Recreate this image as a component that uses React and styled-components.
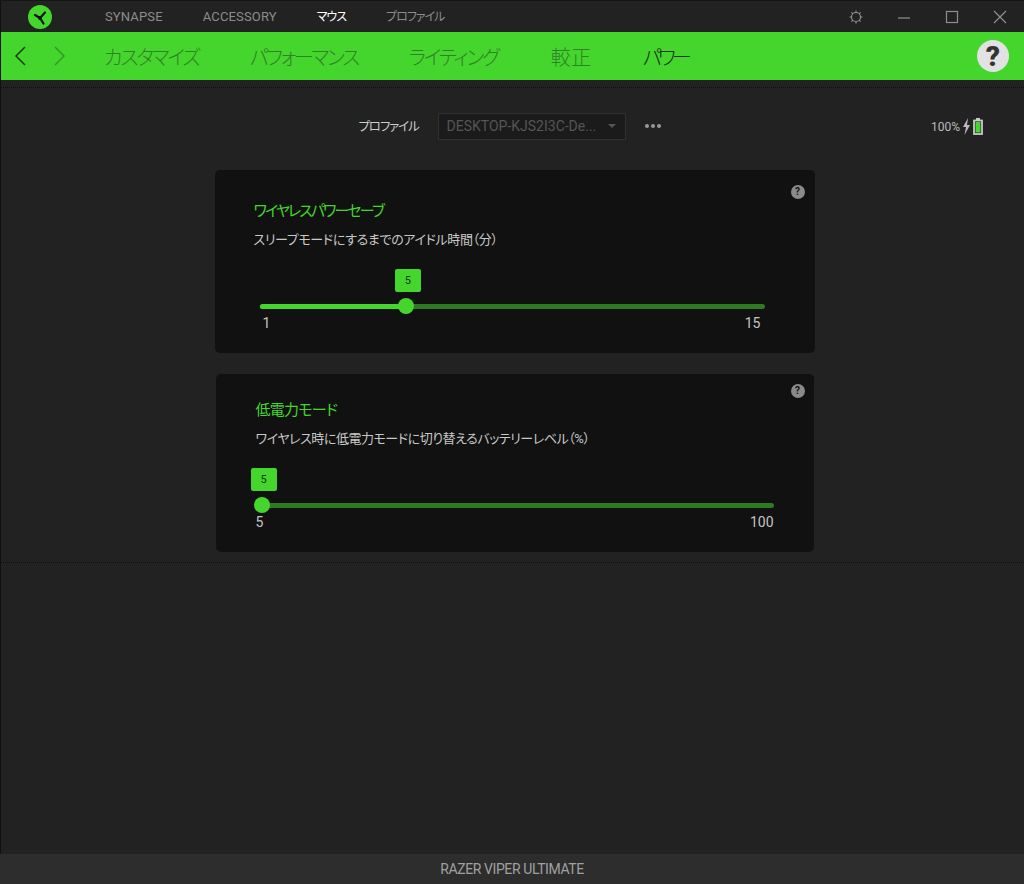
import React from 'react';
import styled, { createGlobalStyle } from 'styled-components';

const GREEN = '#44d62c';
const FONT = 'Roboto, "Noto Sans CJK JP", sans-serif';

const GlobalStyle = createGlobalStyle`
  html, body {
    margin: 0;
    height: 100%;
    overflow: hidden;
    background: #222;
  }
  body {
    font-family: ${FONT};
    font-feature-settings: "palt";
  }
`;

const Shell = styled.div`
  height: 884px;
  display: flex;
  flex-direction: column;
  box-sizing: border-box;
  border-top: 1px solid #151515;
`;

const Frame = styled.div`
  flex: 1;
  display: flex;
  flex-direction: column;
  border-left: 1px solid #111;
  min-height: 0;
`;

// top bar
const TitleBar = styled.header`
  height: 31px;
  display: flex;
  align-items: center;
  background: #222;
`;

const LogoSlot = styled.div`
  width: 104px;
  padding-left: 26px;
  box-sizing: border-box;
  display: flex;
`;

const TopNav = styled.nav`
  display: flex;
  align-items: center;
  gap: 40px;
`;

const TopLink = styled.span`
  font-size: ${(p) => (p.$kana ? 12 : 13)}px;
  line-height: 16px;
  letter-spacing: ${(p) => (p.$kana ? '-1px' : '0.15px')};
  color: ${(p) => (p.$active ? '#fff' : '#8c8c8c')};
`;

const WindowButtons = styled.div`
  margin-left: auto;
  display: flex;
  align-items: center;
  padding-right: 16px;
  gap: 32px;
`;

const WindowIcon = styled.svg`
  display: block;
  width: 16px;
  height: 16px;
  fill: none;
  stroke: #8f8f8f;
  stroke-width: 1.2;
`;

// green bar
const SubBar = styled.div`
  height: 48px;
  flex: none;
  display: flex;
  align-items: center;
  background: ${GREEN};
`;

const Arrows = styled.div`
  width: 103px;
  padding-left: 13px;
  box-sizing: border-box;
  display: flex;
  gap: 24px;
`;

const Arrow = styled.svg`
  display: block;
  width: 14px;
  height: 20px;
  fill: none;
  stroke: ${(p) => (p.$dim ? '#319c22' : '#1c3a16')};
  stroke-width: 1.5;
`;

const SubNav = styled.nav`
  display: flex;
  gap: 51px;
`;

const SubLink = styled.span`
  font-size: 20px;
  font-weight: 300;
  margin-left: ${(p) => p.$lead ?? 0}px;
  letter-spacing: ${(p) => p.$spacing ?? -2.1}px;
  color: ${(p) => (p.$active ? '#16300f' : '#34802a')};
`;

const HelpBig = styled.div`
  margin-left: auto;
  margin-right: 15px;
  width: 32px;
  height: 32px;
  border-radius: 50%;
  background: #e2e2e2;
  color: #333;
  font-size: 28px;
  font-weight: 900;
  display: flex;
  align-items: center;
  justify-content: center;
`;

// page
const Section = styled.main`
  margin-top: 7px;
  border-top: 1px dotted #0d0d0d;
  border-bottom: 1px dotted #0d0d0d;
  height: 474px;
  flex: none;
  padding-left: 4px;
  display: flex;
  flex-direction: column;
  align-items: center;
`;

const ProfileRow = styled.div`
  width: 100%;
  box-sizing: border-box;
  padding: 25px 10px 0 0;
  display: grid;
  grid-template-columns: 1fr auto 1fr;
  align-items: center;
`;

const ProfileControls = styled.div`
  grid-column: 2;
  display: flex;
  align-items: center;
`;

const ProfileLabel = styled.span`
  font-size: 12.5px;
  letter-spacing: -1.15px;
  padding-bottom: 2px;
  color: #ccc;
  margin-right: 19px;
`;

const ProfileSelect = styled.div`
  width: 188px;
  height: 27px;
  box-sizing: border-box;
  padding: 0 9px 2px 8px;
  display: flex;
  align-items: center;
  justify-content: space-between;
  background: #1b1b1b;
  border: 1px solid #303030;
  font-size: 14px;
  color: #555;
`;

const Caret = styled.span`
  width: 0;
  height: 0;
  border-left: 4px solid transparent;
  border-right: 4px solid transparent;
  border-top: 4px solid #555;
`;

const Dots = styled.div`
  display: flex;
  gap: 2px;
  margin-left: 19px;
  padding-bottom: 2px;
`;

const Dot = styled.span`
  width: 4px;
  height: 4px;
  border-radius: 50%;
  background: #999;
`;

const Battery = styled.div`
  grid-column: 3;
  justify-self: end;
  padding-right: 31px;
  display: flex;
  align-items: center;
  gap: 2px;
  font-size: 12px;
  color: #bbb;
`;

const Card = styled.section`
  position: relative;
  box-sizing: border-box;
  width: ${(p) => p.$width}px;
  height: ${(p) => p.$height}px;
  margin-top: ${(p) => p.$top}px;
  padding: ${(p) => p.$padTop}px ${(p) => p.$padRight}px 0 ${(p) => p.$padLeft}px;
  background: #111;
  border-radius: 5px;
`;

const CardHelp = styled.span`
  position: absolute;
  top: ${(p) => p.$top}px;
  right: ${(p) => p.$right}px;
  width: 14px;
  height: 14px;
  border-radius: 50%;
  background: #8a8a8a;
  color: #111;
  font-size: 10px;
  font-weight: 700;
  line-height: 14px;
  text-align: center;
`;

const CardTitle = styled.h2`
  margin: 0;
  font-size: 15px;
  line-height: 20px;
  font-weight: 400;
  letter-spacing: ${(p) => p.$spacing}px;
  color: ${GREEN};
`;

const CardText = styled.p`
  margin: 10px 0 0;
  font-size: 13px;
  line-height: 18px;
  letter-spacing: ${(p) => p.$spacing}px;
  color: #c8c8c8;
`;

const Slider = styled.div`
  margin-top: 55px;
  margin-left: ${(p) => p.$left}px;
`;

const Track = styled.div`
  position: relative;
  height: 5px;
  border-radius: 3px;
  background: #2d7a22;
`;

const TrackFill = styled.div`
  height: 100%;
  border-radius: 3px;
  background: ${GREEN};
`;

const Thumb = styled.span`
  position: absolute;
  top: -6px;
  width: 16px;
  height: 16px;
  margin-left: -8px;
  border-radius: 50%;
  background: ${GREEN};
`;

const Bubble = styled.span`
  position: absolute;
  top: -35px;
  width: 26px;
  height: 23px;
  margin-left: -11px;
  border-radius: 2px;
  background: ${GREEN};
  color: #14380e;
  font-size: 11px;
  line-height: 23px;
  text-align: center;
`;

const Scale = styled.div`
  display: flex;
  justify-content: space-between;
  margin: 6px ${(p) => p.$end}px 0 ${(p) => p.$inset}px;
  font-size: 14px;
  line-height: 16px;
  color: #c4c4c4;
`;

const Footer = styled.footer`
  height: 30px;
  flex: none;
  margin-top: auto;
  display: flex;
  align-items: center;
  justify-content: center;
  background: #2d2d2d;
  color: #a0a0a0;
  font-size: 14px;
  letter-spacing: -0.4px;
`;

const PowerSlider = ({ min, max, value, width, left, inset, end }) => {
  const pos = 2 + ((value - min) / (max - min)) * width;
  return (
    <Slider $left={left}>
      <Track>
        <TrackFill style={{ width: pos }} />
        <Bubble style={{ left: pos }}>{value}</Bubble>
        <Thumb style={{ left: pos }} />
      </Track>
      <Scale $inset={inset} $end={end}>
        <span>{min}</span>
        <span>{max}</span>
      </Scale>
    </Slider>
  );
};

const Logo = () => (
  <svg width="26" height="26" viewBox="0 0 26 26">
    <circle cx="13" cy="13" r="12" fill={GREEN} />
    <path d="M13 14 L8 11 M13 14 L18 8.5 M13 14 L16.5 19.5" stroke="#111" strokeWidth="2.2" fill="none" strokeLinecap="round" />
    <circle cx="13" cy="14" r="2" fill="#111" />
  </svg>
);

const App = () => (
  <Shell>
    <GlobalStyle />
    <Frame>
      <TitleBar>
        <LogoSlot><Logo /></LogoSlot>
        <TopNav>
          <TopLink>SYNAPSE</TopLink>
          <TopLink>ACCESSORY</TopLink>
          <TopLink $kana $active>マウス</TopLink>
          <TopLink $kana>プロファイル</TopLink>
        </TopNav>
        <WindowButtons>
          <WindowIcon viewBox="0 0 16 16">
            <circle cx="8" cy="8" r="4.5" />
            <path d="M8 1.5v2M8 12.5v2M1.5 8h2M12.5 8h2M3.4 3.4l1.4 1.4M11.2 11.2l1.4 1.4M3.4 12.6l1.4-1.4M11.2 4.8l1.4-1.4" />
          </WindowIcon>
          <WindowIcon viewBox="0 0 16 16"><path d="M2 9h12" /></WindowIcon>
          <WindowIcon viewBox="0 0 16 16"><rect x="2.5" y="2.5" width="11" height="11" /></WindowIcon>
          <WindowIcon viewBox="0 0 16 16"><path d="M2 2l12 12M14 2L2 14" /></WindowIcon>
        </WindowButtons>
      </TitleBar>
      <SubBar>
        <Arrows>
          <Arrow viewBox="0 0 14 20"><path d="M11 1L2 10l9 9" /></Arrow>
          <Arrow $dim viewBox="0 0 14 20"><path d="M3 1l9 9-9 9" /></Arrow>
        </Arrows>
        <SubNav>
          <SubLink>カスタマイズ</SubLink>
          <SubLink $spacing={-2.3}>パフォーマンス</SubLink>
          <SubLink $spacing={-2.3}>ライティング</SubLink>
          <SubLink $lead={2} $spacing={0.5}>較正</SubLink>
          <SubLink $active $spacing={-3.6}>パワー</SubLink>
        </SubNav>
        <HelpBig>?</HelpBig>
      </SubBar>
      <Section>
        <ProfileRow>
          <ProfileControls>
            <ProfileLabel>プロファイル</ProfileLabel>
            <ProfileSelect>
              <span>DESKTOP-KJS2I3C-De...</span>
              <Caret />
            </ProfileSelect>
            <Dots><Dot /><Dot /><Dot /></Dots>
          </ProfileControls>
          <Battery>
            <span>100%</span>
            <svg width="9" height="17" viewBox="0 0 9 17">
              <path d="M6 0L1 9h3l-1.5 8L8 7H5z" fill="#bbb" />
            </svg>
            <svg width="10" height="17" viewBox="0 0 10 17">
              <path d="M3 0h4v2H3z" fill="#c8c8c8" />
              <rect x="1" y="2.5" width="8" height="13.5" fill="none" stroke="#c8c8c8" strokeWidth="1.8" />
              <rect x="2.5" y="4" width="5" height="10.5" fill={GREEN} />
            </svg>
          </Battery>
        </ProfileRow>
        <Card $width={600} $height={183} $top={30} $padTop={31} $padRight={50} $padLeft={39}>
          <CardHelp $top={15} $right={10}>?</CardHelp>
          <CardTitle $spacing={-1.9}>ワイヤレスパワーセーブ</CardTitle>
          <CardText $spacing={-0.35}>スリープモードにするまでのアイドル時間（分）</CardText>
          <PowerSlider min={1} max={15} value={5} width={505} left={6} inset={3} end={4} />
        </Card>
        <Card $width={598} $height={178} $top={21} $padTop={26} $padRight={40} $padLeft={40}>
          <CardHelp $top={10} $right={9}>?</CardHelp>
          <CardTitle $spacing={-0.7}>低電力モード</CardTitle>
          <CardText $spacing={-0.45}>ワイヤレス時に低電力モードに切り替えるバッテリーレベル（%）</CardText>
          <PowerSlider min={5} max={100} value={5} width={514} left={4} inset={-4} end={0} />
        </Card>
      </Section>
    </Frame>
    <Footer>RAZER VIPER ULTIMATE</Footer>
  </Shell>
);

export default App;
